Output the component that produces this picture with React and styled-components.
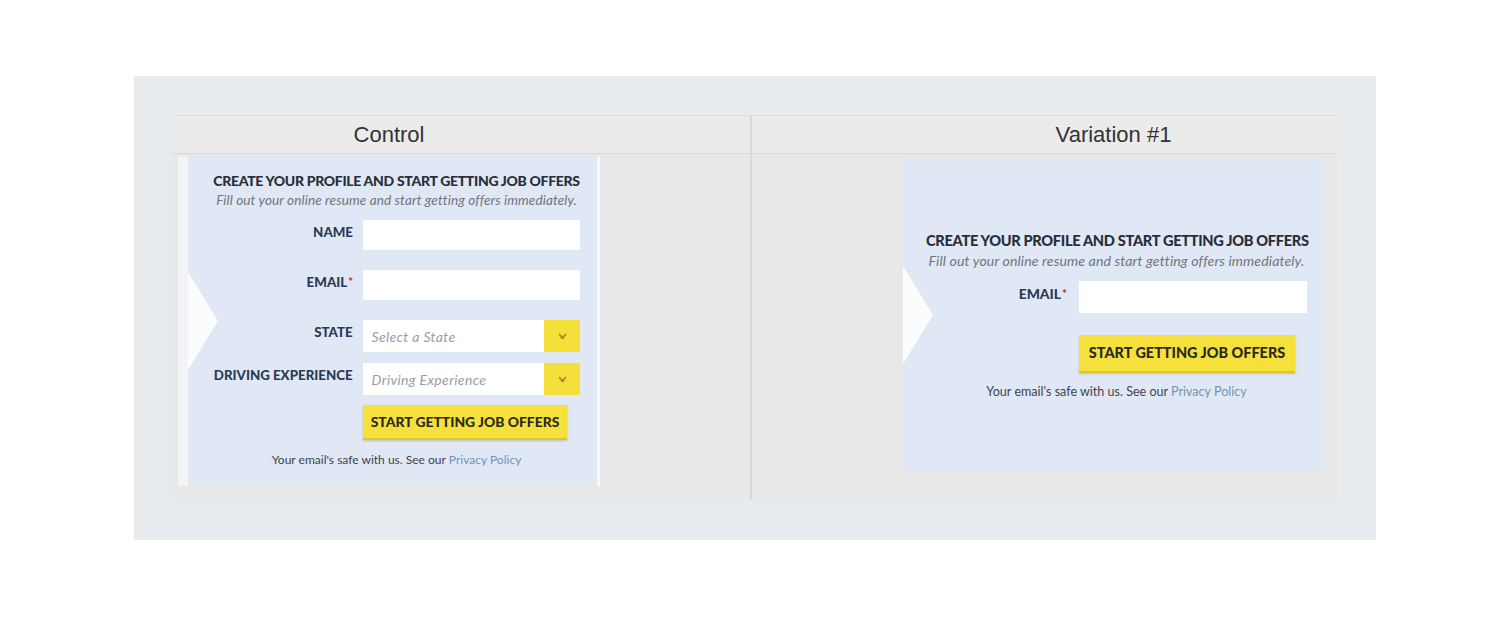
import React from "react";
import styled, { createGlobalStyle } from "styled-components";

const GlobalStyle = createGlobalStyle`
  body {
    margin: 0;
    background: #ffffff;
    font-family: "Liberation Sans", Arial, sans-serif;
  }
`;

const Frame = styled.div`
  margin: 76px 0 0 134px;
  width: 1242px;
  height: 464px;
  box-sizing: border-box;
  padding: 39px 39px 40px 38px;
  background: #e8ebee;
`;

const Table = styled.div`
  display: flex;
  height: 385px;
  background: #e8e8e8;
  border-top: 1px solid #dedede;
  box-sizing: border-box;
`;

const Column = styled.div`
  display: flex;
  flex-direction: column;
  width: ${(p) => p.$width}px;
  border-right: ${(p) => (p.$divider ? "2px solid #d9d9d9" : "none")};
`;

const HeaderBar = styled.div`
  height: 37px;
  display: flex;
  background: #ebebeb;
  border-bottom: 1px solid #d7d7d7;
`;

const HeaderTitle = styled.div`
  margin-left: ${(p) => p.$inset}px;
  width: ${(p) => p.$width}px;
  text-align: center;
  font-size: 22px;
  line-height: 37px;
  color: #333333;
`;

const Body = styled.div`
  flex: 1;
  padding: ${(p) => p.$top}px 0 0 ${(p) => p.$inset}px;
`;

const Panel = styled.div`
  position: relative;
  display: flex;
  flex-direction: column;
  justify-content: ${(p) => (p.$centered ? "center" : "flex-start")};
  box-sizing: border-box;
  width: ${(p) => p.$width}px;
  height: ${(p) => p.$height}px;
  padding: ${(p) => p.$padTop}px ${(p) => p.$padRight}px 0 ${(p) => p.$padLeft}px;
  background: #dfe8f4;
  border-left: ${(p) => (p.$edged ? "10px solid #f2f4f7" : "none")};
  border-right: ${(p) => (p.$edged ? "3px solid #f6f7f9" : "none")};
  font-family: Lato, "Open Sans", sans-serif;
  font-size: ${(p) => p.$base}px;

  &::before {
    content: "";
    position: absolute;
    left: 0;
    top: 50%;
    transform: translateY(-50%);
    border-top: 49px solid transparent;
    border-bottom: 49px solid transparent;
    border-left: 30px solid #fbfcfd;
  }
`;

const Title = styled.div`
  font-weight: 900;
  font-size: 1em;
  line-height: 17px;
  color: #2a2e38;
  text-align: center;
  letter-spacing: -0.32px;
  white-space: nowrap;
`;

const Subtitle = styled.div`
  margin-top: 4px;
  font-style: italic;
  font-size: 0.97em;
  line-height: 15px;
  letter-spacing: 0.1px;
  color: #70757f;
  text-align: center;
  white-space: nowrap;
`;

const Row = styled.div`
  display: flex;
  align-items: flex-start;
  gap: ${(p) => p.$gap}px;
  margin-top: ${(p) => p.$mt}px;
`;

const Label = styled.div`
  width: ${(p) => p.$width}px;
  padding-top: ${(p) => p.$pt || 5}px;
  text-align: right;
  font-weight: 900;
  font-size: 0.95em;
  line-height: 14px;
  color: #2d3a55;
  white-space: nowrap;
`;

const Required = styled.span`
  color: #c0303c;
  font-size: 0.85em;
  vertical-align: top;
  margin-left: 1px;
`;

const Input = styled.div`
  width: ${(p) => p.$width}px;
  height: ${(p) => p.$height}px;
  background: #ffffff;
  border-radius: 1px;
`;

const Select = styled.div`
  display: flex;
  width: ${(p) => p.$width}px;
  height: 32px;
  background: #ffffff;
`;

const Placeholder = styled.div`
  flex: 1;
  padding-left: 9px;
  font-style: italic;
  font-size: 1em;
  letter-spacing: 0.35px;
  line-height: 34px;
  color: #9a9ea6;
`;

const Caret = styled.div`
  width: 36px;
  display: flex;
  align-items: center;
  justify-content: center;
  background: #f5df3a;
`;

const ButtonRow = styled.div`
  margin-top: ${(p) => p.$mt}px;
  padding-left: ${(p) => p.$indent}px;
`;

const SubmitButton = styled.button`
  width: ${(p) => p.$width}px;
  height: ${(p) => p.$height}px;
  padding: 0;
  border: none;
  border-bottom: 2px solid #dcc52e;
  background: #f6e03c;
  box-shadow: 0 1px 2px rgba(80, 70, 0, 0.25);
  font-family: Lato, "Open Sans", sans-serif;
  font-weight: 900;
  font-size: 0.99em;
  color: #2b2a1a;
  letter-spacing: 0px;
  cursor: pointer;
`;

const Footer = styled.div`
  margin-top: ${(p) => p.$mt}px;
  text-align: center;
  font-size: 0.86em;
  line-height: 14px;
  color: #3f4450;
  white-space: nowrap;
`;

const Link = styled.a`
  color: #7890b6;
  text-decoration: none;
`;

const Chevron = () => (
  <svg width="9" height="7" viewBox="0 0 9 7">
    <path d="M1 1.2l3.5 3.3L8 1.2" fill="none" stroke="#a08e1c" strokeWidth="1.6" />
    <path d="M2.5 4.2l2 1.6 2-1.6" fill="none" stroke="#a08e1c" strokeWidth="1.2" />
  </svg>
);

const ControlForm = () => (
  <Panel $edged $width={422} $height={330} $padTop={16} $padLeft={25} $padRight={17} $base={14}>
    <Title>CREATE YOUR PROFILE AND START GETTING JOB OFFERS</Title>
    <Subtitle>Fill out your online resume and start getting offers immediately.</Subtitle>
    <Row $gap={10} $mt={12}>
      <Label $width={140}>NAME</Label>
      <Input $width={217} $height={30} />
    </Row>
    <Row $gap={10} $mt={20}>
      <Label $width={140}>
        EMAIL<Required>*</Required>
      </Label>
      <Input $width={217} $height={30} />
    </Row>
    <Row $gap={10} $mt={20}>
      <Label $width={140}>STATE</Label>
      <Select $width={218}>
        <Placeholder>Select a State</Placeholder>
        <Caret>
          <Chevron />
        </Caret>
      </Select>
    </Row>
    <Row $gap={10} $mt={11}>
      <Label $width={140}>DRIVING EXPERIENCE</Label>
      <Select $width={218}>
        <Placeholder>Driving Experience</Placeholder>
        <Caret>
          <Chevron />
        </Caret>
      </Select>
    </Row>
    <ButtonRow $mt={10} $indent={150}>
      <SubmitButton $width={204} $height={35}>START GETTING JOB OFFERS</SubmitButton>
    </ButtonRow>
    <Footer $mt={13}>
      Your email's safe with us. See our <Link>Privacy Policy</Link>
    </Footer>
  </Panel>
);

const VariationForm = () => (
  <Panel $centered $width={421} $height={312} $padTop={0} $padLeft={23} $padRight={17} $base={14.6}>
    <Title>CREATE YOUR PROFILE AND START GETTING JOB OFFERS</Title>
    <Subtitle>Fill out your online resume and start getting offers immediately.</Subtitle>
    <Row $gap={12} $mt={13}>
      <Label $width={141} $pt={6}>
        EMAIL<Required>*</Required>
      </Label>
      <Input $width={228} $height={32} />
    </Row>
    <ButtonRow $mt={22} $indent={153}>
      <SubmitButton $width={216} $height={38}>START GETTING JOB OFFERS</SubmitButton>
    </ButtonRow>
    <Footer $mt={12}>
      Your email's safe with us. See our <Link>Privacy Policy</Link>
    </Footer>
  </Panel>
);

export default function App() {
  return (
    <>
      <GlobalStyle />
      <Frame>
        <Table>
          <Column $width={579} $divider>
            <HeaderBar>
              <HeaderTitle $inset={6} $width={422}>Control</HeaderTitle>
            </HeaderBar>
            <Body $top={2} $inset={6}>
              <ControlForm />
            </Body>
          </Column>
          <Column $width={586}>
            <HeaderBar>
              <HeaderTitle $inset={151} $width={421}>Variation #1</HeaderTitle>
            </HeaderBar>
            <Body $top={5} $inset={151}>
              <VariationForm />
            </Body>
          </Column>
        </Table>
      </Frame>
    </>
  );
}
